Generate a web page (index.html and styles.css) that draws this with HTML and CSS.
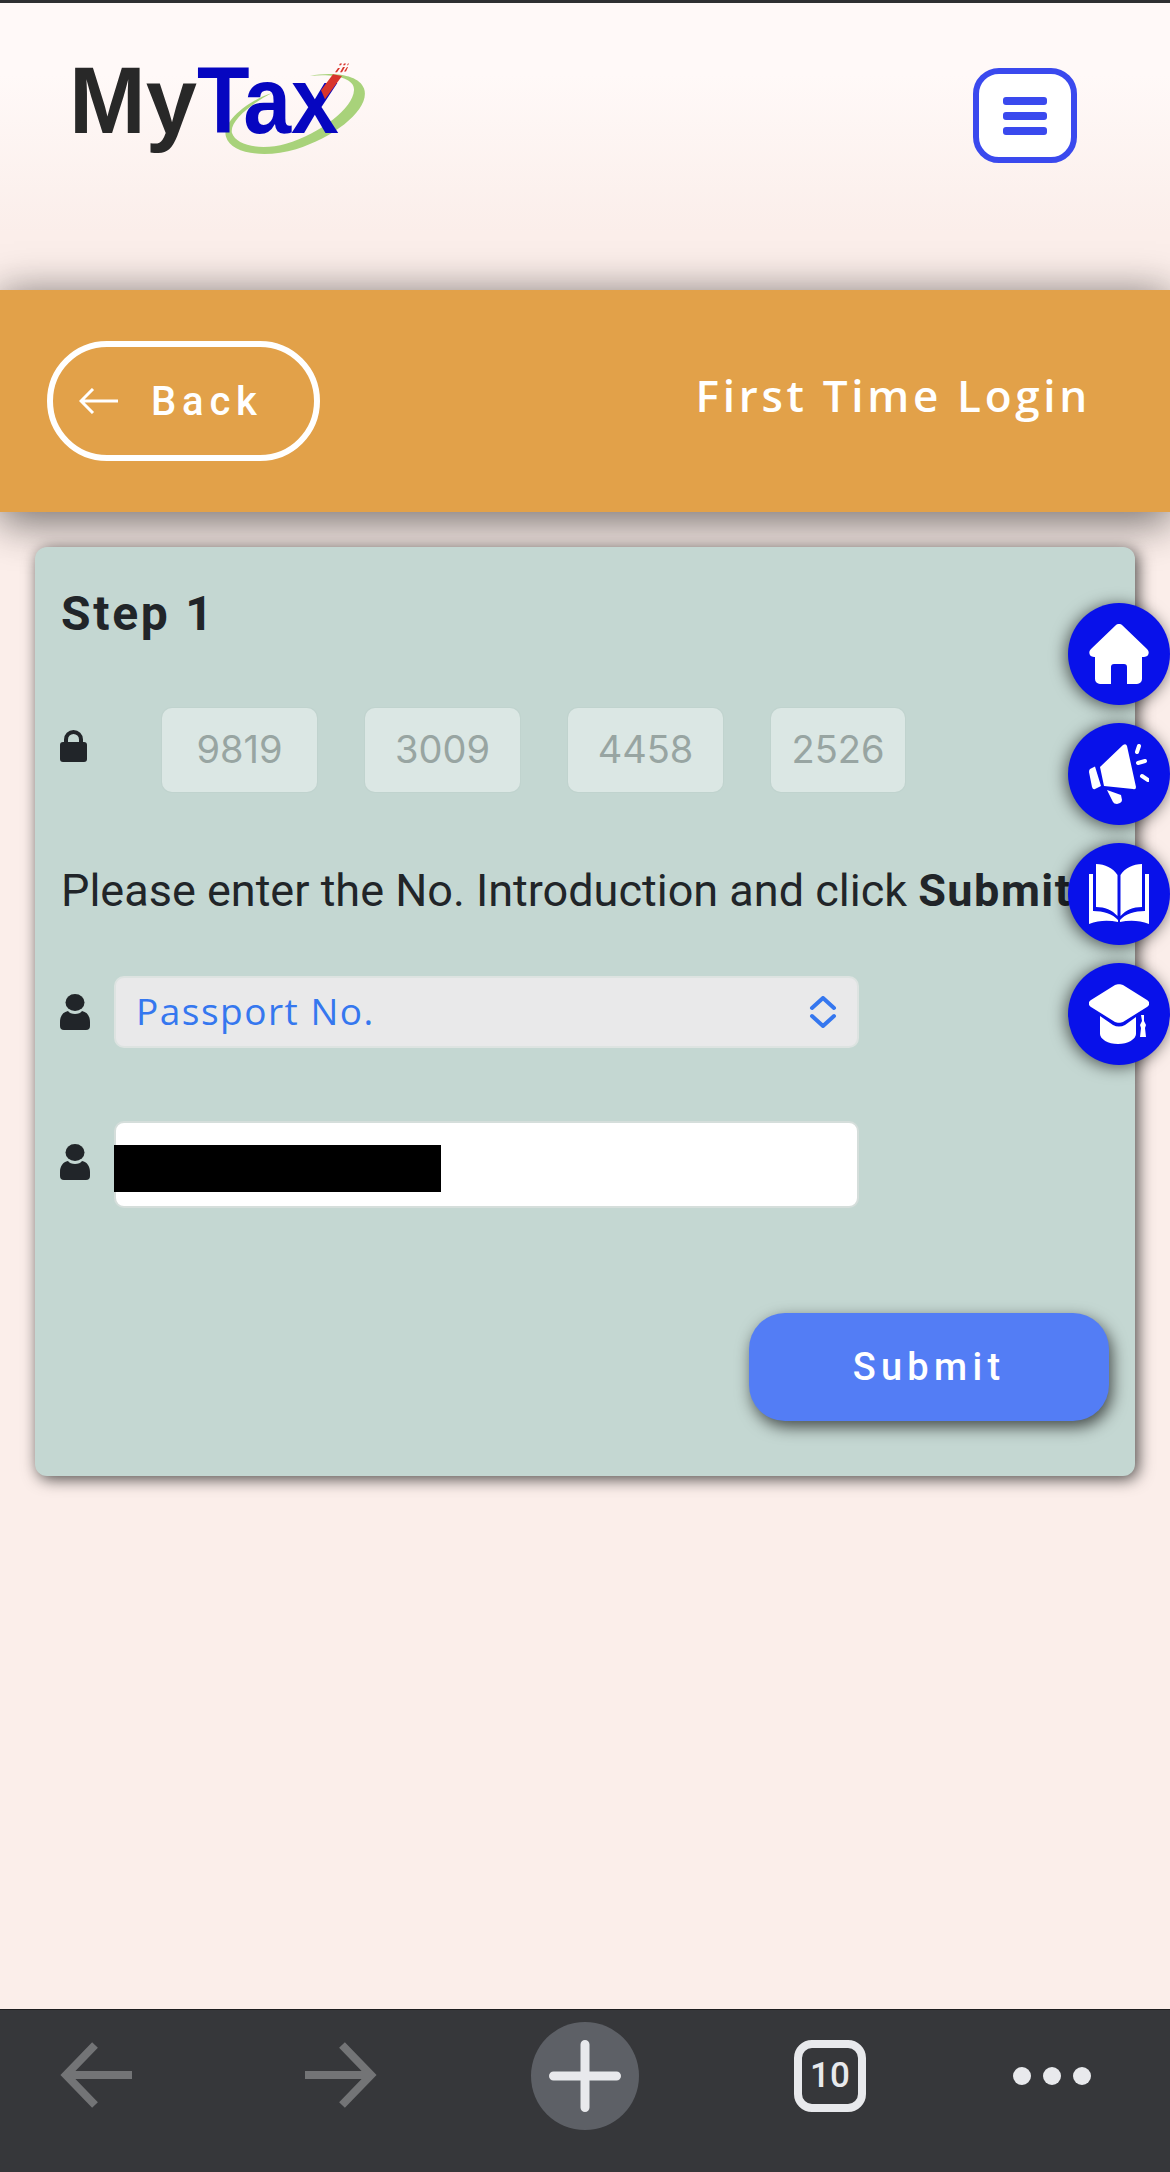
FILE: index.html
```html
<!DOCTYPE html>
<html lang="en">
<head>
<meta charset="utf-8">
<title>MyTax</title>
<link rel="stylesheet" href="styles.css">
</head>
<body>
<div class="page">
  <header class="topbar">
    <svg class="logo" viewBox="0 0 300 120" width="300" height="120">
      <g transform="translate(0 -5.500) scale(1 .8933)">
        <path class="logo-ring" d="M201 43C180 50 150 75 155 92C160 112 195 116 225 106C265 92 300 60 293 38C288 22 260 19 239 24C262 21 284 26 283 40C282 60 250 88 215 100C190 108 165 102 161 88C158 75 180 55 201 43Z"/>
      </g>
      <text class="logo-text" y="73"><tspan class="logo-my" x="-2" textLength="128" lengthAdjust="spacingAndGlyphs">My</tspan><tspan class="logo-tax" x="126" textLength="142" lengthAdjust="spacingAndGlyphs">Tax</tspan></text>
      <g transform="translate(0 -5.500) scale(1 .8933)">
        <path class="logo-check" d="M250 40 262 22 271 24 254 50Z"/>
        <path class="logo-dots" d="M264 20l3-5h2l-3 5zM269 20l3-6h2l-3 6zM273 19l3-5h1l-2 5zM268 12l1-2h2l-1 2zM272 12l1-2h2l-1 2zM276 12l1-2h1l-1 2z"/>
      </g>
    </svg>
    <button class="menu" type="button" aria-label="Menu">
      <span class="menu-line"></span><span class="menu-line"></span><span class="menu-line"></span>
    </button>
  </header>

  <section class="band">
    <a class="back">
      <svg class="back-arrow" viewBox="0 0 40 26" width="40" height="26"><path d="M39 13H2M14 1 2 13l12 12"/></svg>
      <span>Back</span>
    </a>
    <h1 class="band-title">First Time Login</h1>
  </section>

  <main class="card">
    <h2 class="step">Step 1</h2>
    <div class="row row-ic">
      <svg class="ico" viewBox="0 0 27 33" width="27" height="33"><path d="M4 14V10.500a9.500 9.500 0 0 1 19 0V14h-4V10.500a5.500 5.500 0 0 0-11 0V14z"/><rect x="0" y="13" width="27" height="20" rx="3"/></svg>
      <div class="ic-fields">
        <div class="ic-box ic-wide">9819</div>
        <div class="ic-box ic-wide">3009</div>
        <div class="ic-box ic-wide">4458</div>
        <div class="ic-box ic-narrow">2526</div>
      </div>
    </div>
    <p class="intro">Please enter the No. Introduction and click <b class="intro-strong">Submit</b></p>
    <div class="row row-select">
      <svg class="ico-user" viewBox="0 0 30 36" width="30" height="36"><ellipse cx="15" cy="8.500" rx="9.500" ry="8.500"/><path d="M8 17C10 21 20 21 22 17C27 18 30 22 30 28V32a4 4 0 0 1-4 4H4a4 4 0 0 1-4-4V28C0 22 3 18 8 17Z"/></svg>
      <div class="select">
        <span class="select-label">Passport No.</span>
        <svg class="chev" viewBox="0 0 28 32" width="28" height="32"><path d="M3 12 14 2l11 10M3 20l11 10 11-10"/></svg>
      </div>
    </div>
    <div class="row row-input">
      <svg class="ico-user" viewBox="0 0 30 36" width="30" height="36"><ellipse cx="15" cy="8.500" rx="9.500" ry="8.500"/><path d="M8 17C10 21 20 21 22 17C27 18 30 22 30 28V32a4 4 0 0 1-4 4H4a4 4 0 0 1-4-4V28C0 22 3 18 8 17Z"/></svg>
      <div class="input"><div class="redact"></div></div>
    </div>
    <div class="actions"><button class="submit" type="button">Submit</button></div>
  </main>

  <nav class="float-nav">
    <a class="fab"><svg viewBox="0 0 60 60" width="60" height="60"><path class="w" d="M30 0a4 4 0 0 1 3 1l25 24c3 3 2 8-3 8h-2v22a5 5 0 0 1-5 5H38V43a3 3 0 0 0-3-3H25a3 3 0 0 0-3 3v17H11a5 5 0 0 1-5-5V33H5c-5 0-6-5-3-8L27 1a4 4 0 0 1 3-1z"/></svg></a>
    <a class="fab"><svg viewBox="0 -1 60 62" width="60" height="62"><path class="w" d="M11 23 34 1Q37-1 38 2L47 43Q47 46 44 45L15 42ZM1 25 6 22.500 12 42 6 45Q4 46 3 43L0 28Q0 26 1 25ZM18 46 32 51 33 56Q33 58 31 59L28 60Q25 60 24 58Z"/><path class="s" d="M48 8l2-6M49 19l7-2M53 32l6 4"/></svg></a>
    <a class="fab"><svg viewBox="0 0 60 60" width="60" height="60"><path class="w" d="M7 0C16 0 24 4 28.500 11V52C23 46 16 43 7 43ZM53 0C44 0 36 4 31.500 11V52C37 46 44 43 53 43ZM0 10H4V47C14 47 24 50 29 56V58C20 56 10 56 0 60ZM60 10H56V47C46 47 36 50 31 56V58C40 56 50 56 60 60Z"/></svg></a>
    <a class="fab"><svg viewBox="0 0 60 60" width="60" height="60"><path class="w" d="M26 1c2-1 6-1 8 0L58 16c3 2 3 5 0 7L34 38c-2 1-6 1-8 0L2 23c-3-2-3-5 0-7ZM11 32 24 41c4 2 8 2 12 0L47 33V50c0 5-8 10-18 10S11 55 11 50ZM52 31h3v6l2 4-1 3 1 9h-6l1-9-1-3 2-4Z"/></svg></a>
  </nav>

  <footer class="browserbar">
    <svg class="nav-arrow" viewBox="0 0 72 66" width="72" height="66"><path d="M72 33H6M35 3 6 33l29 30"/></svg>
    <svg class="nav-arrow" viewBox="0 0 72 66" width="72" height="66"><path d="M0 33h66M37 3l29 30-29 30"/></svg>
    <div class="plus">
      <svg viewBox="0 0 72 72" width="72" height="72"><path d="M36 4.500v63M4.500 36h63"/></svg>
    </div>
    <div class="tabs">10</div>
    <div class="dots"><span></span><span></span><span></span></div>
  </footer>
</div>
</body>
</html>
```
FILE: styles.css
```css
* { box-sizing: border-box; }
html, body { margin: 0; padding: 0; }
body { width: 1170px; height: 2172px; overflow: hidden; background: #fbeeea; font-family: Roboto, "Liberation Sans", sans-serif; color: #212529; }
.page { position: relative; width: 1170px; height: 2172px; display: flex; flex-direction: column; }

.topbar { height: 290px; flex: none; border-top: 3px solid #2f3032; background: linear-gradient(180deg, #fff9f8 0%, #fff9f8 25%, #fbeeea 80%, #fbeeea 100%); display: flex; justify-content: space-between; align-items: flex-start; padding: 57px 93px 0 71px; }
.logo { display: block; overflow: visible; }
.logo-text { font: 700 95px "Liberation Sans", sans-serif; }
.logo-my { fill: #282828; }
.logo-tax { fill: #0606c0; }
.logo-ring { fill: #a8d27a; }
.logo-check { fill: #d8352c; }
.logo-dots { fill: #d8352c; }
.menu { width: 104px; height: 95px; margin-top: 8px; border: 6px solid #3a49ee; border-radius: 26px; background: #fff; display: flex; flex-direction: column; align-items: center; justify-content: center; gap: 7px; padding: 0; }
.menu-line { width: 44px; height: 8px; border-radius: 3px; background: #3a49ee; }

.band { height: 222px; flex: none; position: relative; z-index: 2; background: #e2a149; box-shadow: 0 0 40px rgba(0,0,0,.35), 0 16px 40px rgba(0,0,0,.3); display: flex; justify-content: space-between; align-items: flex-start; padding: 51px 79px 0 47px; color: #fff; }
.back { width: 273px; height: 120px; border: 6px solid #fff; border-radius: 60px; display: flex; align-items: center; padding-left: 26px; gap: 32px; font: 500 40px Roboto, sans-serif; letter-spacing: 5.800px; }
.back-arrow { fill: none; stroke: #fff; stroke-width: 3; }
.band-title { margin: 24px 0 0; font: 600 44px "Open Sans", sans-serif; letter-spacing: 3.700px; }

.card { position: absolute; z-index: 3; left: 35px; top: 547px; width: 1100px; height: 929px; background: #c4d7d2; border-radius: 12px; box-shadow: 3px 3px 16px rgba(0,0,0,.7); padding: 20px 26px; }
.step { margin: 21px 0 0; font: 700 48px/52px Roboto, sans-serif; letter-spacing: 2.700px; }
.row { display: flex; align-items: center; }
.row-ic { margin-top: 68px; height: 84px; }
.ico { fill: #212529; margin: 0 0 10px -1px; flex: none; }
.ic-fields { margin-left: 75px; display: flex; gap: 48px; }
.ic-box { height: 84px; border-radius: 10px; background: #dbe7e4; box-shadow: 0 0 0 1px #c0d3ce; color: #98a5a2; font: 400 38px/82px Inter, sans-serif; text-align: center; }
.ic-wide { width: 155px; }
.ic-narrow { width: 134px; }
.intro { margin: 73px 0 0; font: 400 45px/52px Roboto, sans-serif; white-space: nowrap; }
.intro-strong { letter-spacing: 1.500px; }
.row-select { margin-top: 59px; }
.ico-user { fill: #212529; flex: none; margin-left: -1px; }
.select { margin-left: 24px; width: 745px; height: 72px; background: #e9e9ea; border: 2px solid #dde3e1; border-radius: 10px; display: flex; align-items: center; justify-content: space-between; padding: 0 20px 0 20px; color: #3577ef; font: 400 37px "Open Sans", sans-serif; letter-spacing: 1.500px; }
.select-label { margin-top: -3px; }
.chev { fill: none; stroke: #3577ef; stroke-width: 4; stroke-linecap: round; stroke-linejoin: round; }
.row-input { margin-top: 73px; }
.row-input .ico-user { margin-bottom: 6px; }
.input { margin-left: 24px; width: 745px; height: 87px; background: #fff; border: 2px solid #d5dedb; border-radius: 10px; display: flex; align-items: center; }
.redact { width: 327px; height: 47px; background: #000; margin-left: -2px; margin-top: 8px; }
.actions { display: flex; justify-content: flex-end; margin-top: 105px; }
.submit { width: 360px; height: 108px; border: 0; border-radius: 36px; background: #537df5; color: #fff; box-shadow: 3px 6px 16px rgba(0,0,0,.65); font: 500 38px Roboto, sans-serif; letter-spacing: 5.300px; }

.float-nav { position: absolute; left: 1068px; top: 603px; display: flex; flex-direction: column; gap: 18px; z-index: 5; }
.fab { width: 102px; height: 102px; border-radius: 50%; background: #0811ea; box-shadow: -2px 2px 16px rgba(0,0,0,.6); display: flex; align-items: center; justify-content: center; }
.w { fill: #fff; }
.s { fill: none; stroke: #fff; stroke-width: 4; stroke-linecap: round; }

.browserbar { position: absolute; z-index: 6; left: 0; right: 0; top: 2009px; height: 163px; background: #36373a; border-top: 1px solid #1d1d1f; }
.nav-arrow { position: absolute; top: 32px; fill: none; stroke: #737476; stroke-width: 8; }
.nav-arrow:nth-child(1) { left: 60px; }
.nav-arrow:nth-child(2) { left: 305px; }
.plus { position: absolute; left: 531px; top: 12px; width: 108px; height: 108px; border-radius: 50%; background: #5d6066; display: flex; align-items: center; justify-content: center; }
.plus svg { fill: none; stroke: #e8e9ec; stroke-width: 9; stroke-linecap: round; }
.tabs { position: absolute; left: 794px; top: 30px; width: 72px; height: 72px; border: 8px solid #e8e9ec; border-radius: 18px; color: #e8e9ec; font: 500 35px/56px Roboto, sans-serif; text-align: center; }
.dots { position: absolute; left: 1013px; top: 57px; display: flex; gap: 12px; }
.dots span { width: 18px; height: 18px; border-radius: 50%; background: #e8e9ec; }
```
